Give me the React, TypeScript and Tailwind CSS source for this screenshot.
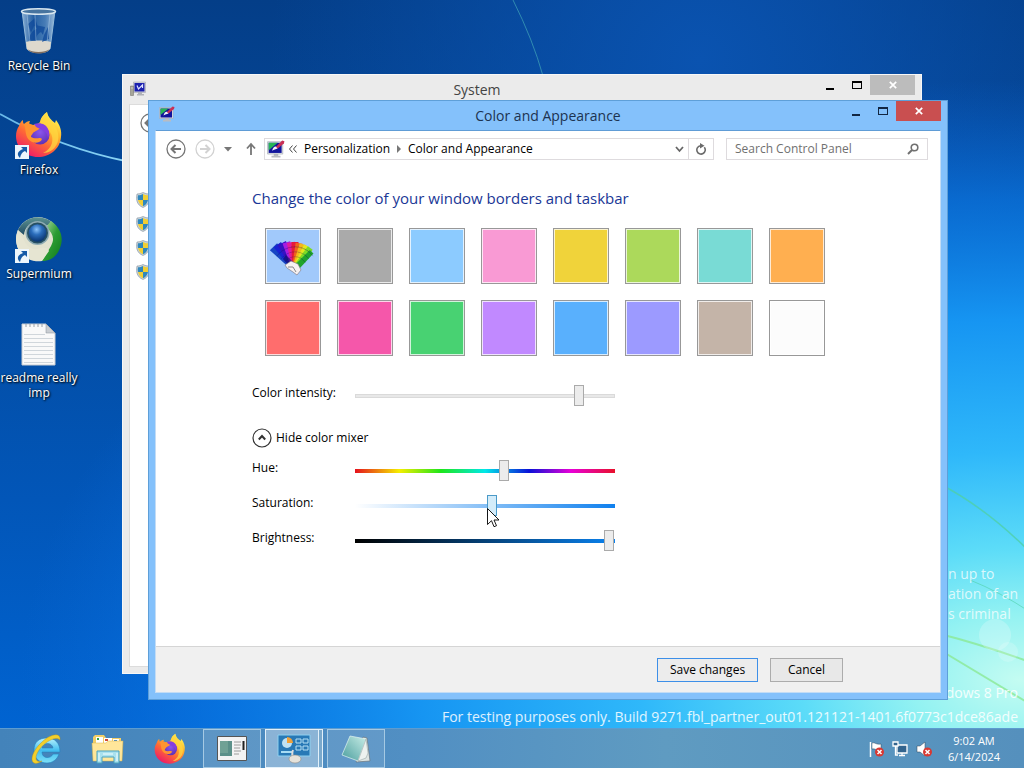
import type { ReactNode } from 'react';

const swatches = [
  { name: 'Automatic', color: 'bg-[#a1c9fb]' },
  { name: 'Gray', color: 'bg-[#aaaaaa]' },
  { name: 'Sky', color: 'bg-[#8ccbff]' },
  { name: 'Pink', color: 'bg-[#f99ad4]' },
  { name: 'Yellow', color: 'bg-[#f0d33a]' },
  { name: 'Lime', color: 'bg-[#acd95b]' },
  { name: 'Turquoise', color: 'bg-[#79dbd5]' },
  { name: 'Orange', color: 'bg-[#ffaf50]' },
  { name: 'Red', color: 'bg-[#ff6d6d]' },
  { name: 'Magenta', color: 'bg-[#f557aa]' },
  { name: 'Green', color: 'bg-[#48d272]' },
  { name: 'Violet', color: 'bg-[#c189ff]' },
  { name: 'Blue', color: 'bg-[#59b0fd]' },
  { name: 'Lavender', color: 'bg-[#9c9aff]' },
  { name: 'Taupe', color: 'bg-[#c4b4a8]' },
  { name: 'White', color: 'bg-[#fcfcfc]' },
];

function FirefoxIcon({ className }: { className: string }) {
  return (
    <svg viewBox="0 0 48 48" className={className} aria-hidden="true">
      <defs>
        <linearGradient id="fxBody" x1="0.8" y1="0.1" x2="0.25" y2="0.95">
          <stop offset="0" stopColor="#fff050" />
          <stop offset="0.3" stopColor="#ffb52c" />
          <stop offset="0.6" stopColor="#ff6a35" />
          <stop offset="1" stopColor="#ee1d66" />
        </linearGradient>
        <radialGradient id="fxGlobe" cx="0.5" cy="0.35" r="0.7">
          <stop offset="0" stopColor="#8a55ee" />
          <stop offset="1" stopColor="#5a2eb0" />
        </radialGradient>
      </defs>
      <path d="M4 15c1-3 2-5 4-6 0 2 0 3 1 4 2-2 4-3 6-3-1 2-1 3 0 4 4 0 7 0 10-3 1-5 4-8 7-10 1 5 4 8 8 11l1-3c4 5 6 11 5 17-1 12-11 20-23 20S1 37 1 25c0-4 1-7 3-10z" fill="url(#fxBody)" />
      <path d="M32 1c0 6 3 9 7 13 4 5 6 12 3 19-3 6-8 9-14 9 9-4 12-14 7-21-3-5-8-6-10-10 1-5 4-8 7-10z" fill="#ffd842" opacity=".75" />
      <circle cx="25" cy="24" r="9.5" fill="url(#fxGlobe)" />
      <path d="M9 13c3 0 7-1 10 2 3 1 5 1 6 2-1 2-5 3-7 5-1 2-2 2-2 4 3 2 7 1 9 1 3 0 2 3-1 4-5 2-10-1-12-5-2-5-1-8-3-13z" fill="#ff9430" />
      <path d="M19 13c6-2 12 0 14 5 2 4 1 7 0 9-1-5-3-7-6-8-3-2-6-2-8-6z" fill="#863ee0" />
    </svg>
  );
}

function ShortcutArrow() {
  return (
    <svg viewBox="0 0 14 14" className="absolute bottom-0 left-0 h-3.5 w-3.5" aria-hidden="true">
      <path d="M0 0h14v14H0z" fill="#eef6fc" />
      <path d="M6 2h6v6l-2-2c-3 1-4 3-5 7C1 9 3 6 8 4z" fill="#175ba8" />
    </svg>
  );
}

function RecycleBinIcon() {
  return (
    <svg viewBox="0 0 48 48" className="h-12 w-12" aria-hidden="true">
      <defs>
        <linearGradient id="glass" x1="0" x2="1">
          <stop offset="0" stopColor="#b9d6ee" stopOpacity=".75" />
          <stop offset=".35" stopColor="#3d77b5" stopOpacity=".6" />
          <stop offset=".7" stopColor="#6b9dce" stopOpacity=".65" />
          <stop offset="1" stopColor="#c4dbee" stopOpacity=".8" />
        </linearGradient>
      </defs>
      <path d="M7 4l5 38c4 5 20 5 23 0l5-38z" fill="url(#glass)" stroke="#94bad9" strokeWidth="1" />
      <path d="M11 35c7-2 18-2 25 0l-1 7c-5 5-18 5-23 0z" fill="#ded9cd" />
      <path d="M12 42c5 4 18 4 23 0-4 6-18 6-23 0z" fill="#806d5e" />
      <path d="M14 33c1-7 4-10 8-11l-2-4 10 2-2 8-2-3c-4 2-5 5-5 9zM13 17l7-6 3 9-4-1-3 7zM33 20l1 12-7 3 2-7z" fill="#0e489a" opacity=".75" />
      <path d="M12 7l3 29M35 7l-3 29M20 7l1 28" stroke="#c8e0f3" strokeWidth="1" opacity=".4" />
      <ellipse cx="23.500" cy="4.500" rx="17" ry="2.800" fill="#47749f" stroke="#d8e6ef" strokeWidth="1.500" />
    </svg>
  );
}

function SupermiumIcon() {
  return (
    <svg viewBox="0 0 48 48" className="h-12 w-12" aria-hidden="true">
      <defs>
        <radialGradient id="smCore" cx=".45" cy=".3" r=".75">
          <stop offset="0" stopColor="#8cc4fb" />
          <stop offset=".4" stopColor="#2b6dbb" />
          <stop offset="1" stopColor="#052c65" />
        </radialGradient>
        <linearGradient id="smGreen" x1="0" x2="1" y2="1">
          <stop offset="0" stopColor="#bfe0b0" />
          <stop offset=".5" stopColor="#2c9c33" />
          <stop offset="1" stopColor="#0f7a1a" />
        </linearGradient>
        <linearGradient id="smBlue" x1="0" x2="0" y2="1">
          <stop offset="0" stopColor="#5e9492" />
          <stop offset="1" stopColor="#1f4a63" />
        </linearGradient>
      </defs>
      <circle cx="23" cy="24" r="22" fill="#e2e2cf" />
      <path d="M3 15C8 5 18 0 28 3c5 1 8 3 10 6l-9 2C18 5 10 10 9 20z" fill="url(#smBlue)" />
      <path d="M36 6c10 7 13 17 9 27-3 8-9 13-18 13l9-15c4-7 2-13-5-19z" fill="url(#smGreen)" />
      <path d="M3 15l6 10c3 8 10 11 17 8 4-1 7 0 8 3l-7 10C13 48 1 38 1 24c0-3 1-6 2-9z" fill="#e6e5d2" />
      <circle cx="22.500" cy="18" r="12" fill="#8eabb2" />
      <circle cx="22.500" cy="18" r="10.500" fill="#264f63" />
      <circle cx="22.500" cy="18" r="8.800" fill="url(#smCore)" />
    </svg>
  );
}

function TextFileIcon() {
  return (
    <svg viewBox="0 0 48 48" className="h-12 w-12" aria-hidden="true">
      <path d="M7 5h24l9 9v32H7z" fill="#f9f9f9" stroke="#c9cdd2" strokeWidth="1" />
      <path d="M31 5v9h9z" fill="#c9cdd2" stroke="#8a929a" strokeWidth=".5" />
      <path d="M9 15.500h21M9 19.500h29M9 23.500h29M9 27.500h29M9 31.500h29M9 35.500h29M9 39.500h29M9 43.500h29" stroke="#d0d6db" />
      <path d="M11 5v3M15 5v3M19 5v3M23 5v3M27 5v3" stroke="#9aa1a7" />
    </svg>
  );
}

function BrushMonitor({ className }: { className: string }) {
  return (
    <svg viewBox="0 0 16 16" className={className} aria-hidden="true">
      <path d="M6 12h4v2h2v1.500H4V14h2z" fill="#b9bcc2" />
      <path d="M.5 1.500h13.500v11H.500z" fill="#dfe1e6" stroke="#9aa0aa" strokeWidth=".5" />
      <path d="M1.500 2.500h11.500v9H1.500z" fill="#10149c" />
      <path d="M1.500 2.500h8L1.500 9z" fill="#27b457" />
      <path d="M4.500 9.500c1-3.500 2.500-4 4-3.500l1 1.500c-2 .5-3 1-5 2z" fill="#f3f3f8" />
      <path d="M8 6l5.500-5.500 2 .5-.5 2-5.500 4.500z" fill="#c92f55" />
    </svg>
  );
}

function ComputerIcon({ className }: { className: string }) {
  return (
    <svg viewBox="0 0 16 16" className={className} aria-hidden="true">
      <path d="M8 11h4v2h2v1.500H7V13h1z" fill="#b0b2b8" />
      <path d="M3.500 1h12v10.500h-12z" fill="#d4d5dc" stroke="#9a9ca8" strokeWidth=".5" />
      <path d="M4.500 2h10v8.500h-10z" fill="#1a1fae" />
      <path d="M7 4.500l1.500 3.500L12.500 4v3" fill="none" stroke="#dfe2ff" strokeWidth="1.200" />
      <path d="M.5 5h3v9.500h-3z" fill="#a6a598" stroke="#6d6d64" strokeWidth=".5" />
      <path d="M1.500 7h1" stroke="#fff" />
    </svg>
  );
}

function ArrowCircle({ back, faded }: { back: boolean; faded: boolean }) {
  return (
    <svg viewBox="0 0 20 20" className="h-5 w-5" fill="none" stroke={faded ? '#d2d2d2' : '#767676'} aria-hidden="true">
      <circle cx="10" cy="10" r="9" strokeWidth="1.300" />
      <path d={back ? 'M15 10H6M9.500 6L5.500 10l4 4' : 'M5 10h9M10.500 6l4 4-4 4'} strokeWidth="2" />
    </svg>
  );
}

function Shield() {
  return (
    <svg viewBox="0 0 14 16" className="h-4 w-3.5" aria-hidden="true">
      <path d="M7 .5c2 1 4 1.500 6 1.500 1.200 6 0 11-6 13.500C1 13 -.2 8 1 2 3 2 5 1.500 7 .500z" fill="#c9d3da" stroke="#7f8f9c" strokeWidth=".6" />
      <path d="M7 2C5.500 3 4 3.200 2 3.200 1.600 5 1.600 6.500 2 8h5z" fill="#2f87bd" />
      <path d="M7 2c1.500 1 3 1.200 5 1.200.4 1.800.4 3.300 0 4.800H7z" fill="#f1cf35" />
      <path d="M2 8h5v6.300C4.200 13 2.600 11 2 8z" fill="#f1cf35" />
      <path d="M7 8h5c-.6 3-2.200 5-5 6.300z" fill="#2f87bd" />
    </svg>
  );
}

const blades = [
  { angle: -44, length: 31, width: 10, fill: '#1745c4' },
  { angle: -36, length: 30, width: 9, fill: '#1a22d2' },
  { angle: -27, length: 29, width: 9, fill: '#3413c2' },
  { angle: -18, length: 28, width: 8, fill: '#a61ee0' },
  { angle: -9, length: 27, width: 8, fill: '#e01c9c' },
  { angle: 0, length: 27, width: 7, fill: '#e51b3b' },
  { angle: 9, length: 26, width: 7, fill: '#f0641d' },
  { angle: 18, length: 26, width: 7, fill: '#f3b91b' },
  { angle: 27, length: 26, width: 6, fill: '#e4e61e' },
  { angle: 36, length: 26, width: 6, fill: '#7fdb25' },
  { angle: 44, length: 24, width: 5, fill: '#1fa32c' },
];

function ColorFan() {
  return (
    <svg viewBox="0 0 54 54" className="h-full w-full" aria-hidden="true">
      {blades.map((b) => (
        <g key={b.fill} transform={`translate(29 40) rotate(${b.angle})`}>
          <path d={`M${-b.width / 2} ${-b.length}h${b.width}L3 0h-6z`} fill={b.fill} />
          <path d="M-4 -22h8M-3 -17h6M-3 -12h6" stroke="#0a0a50" strokeWidth=".6" opacity=".4" />
        </g>
      ))}
      <path d="M17 30l8 9 3-5-8-8z" fill="#0c1060" opacity=".6" />
      <path d="M19 36l6-4 7 3 3 6-4 5-4-3-6-4z" fill="#f6f1f1" stroke="#77717a" strokeWidth=".6" />
      <path d="M22 38l5 0 3 5" fill="none" stroke="#888" />
    </svg>
  );
}

function WindowControls({ active }: { active: boolean }) {
  return (
    <div className="flex h-5 pr-1.5">
      <button aria-label="Minimize" className="flex w-[27px] items-end justify-center pb-[5px]">
        <span className={active ? 'h-0.5 w-2 bg-[#132742]' : 'h-0.5 w-2 bg-black'} />
      </button>
      <button aria-label="Maximize" className="flex w-[27px] items-center justify-center">
        <span className={active ? 'h-2 w-2.5 border border-t-2 border-[#132742]' : 'h-2 w-2.5 border border-t-2 border-black'} />
      </button>
      <button aria-label="Close" className={active ? 'flex w-[45px] items-center justify-center bg-[#c94f50]' : 'flex w-[45px] items-center justify-center bg-[#bcbcbc]'}>
        <svg viewBox="0 0 8 8" className="h-2 w-2" stroke="#fff" strokeWidth="1.700" aria-hidden="true">
          <path d="M.8.800l6.400 6.400M7.200.800L.8 7.200" />
        </svg>
      </button>
    </div>
  );
}

function DesktopIcon({ label, shortcut, children }: { label: string; shortcut?: boolean; children: ReactNode }) {
  return (
    <li className="h-[104px]">
      <a href="#desktop" className="flex flex-col items-center gap-[3px]">
        <span className="relative">
          {children}
          {shortcut && <ShortcutArrow />}
        </span>
        <span className="text-center text-xs leading-[15px] text-white [text-shadow:1px_1px_2px_#000,0_0_2px_#0008]">{label}</span>
      </a>
    </li>
  );
}

function SliderRow({ id, label, value, track, hot, children }: { id: string; label: string; value: number; track: string; hot?: boolean; children?: ReactNode }) {
  const thumb = hot
    ? '[&::-webkit-slider-thumb]:border-[#4b9ac8] [&::-webkit-slider-thumb]:bg-[#d3ecfa]'
    : '[&::-webkit-slider-thumb]:border-[#aaaaaa] [&::-webkit-slider-thumb]:bg-[#ececec]';
  return (
    <div className="flex h-[23px]">
      <label htmlFor={id} className="w-[103px] shrink-0 leading-5">{label}</label>
      <div className="relative flex h-[21px] w-[260px] items-center self-end">
        <span className={`absolute inset-x-0 h-1 ${track}`} />
        <input
          id={id}
          type="range"
          min={0}
          max={250}
          defaultValue={value}
          className={`relative h-[21px] w-full appearance-none bg-transparent [&::-webkit-slider-thumb]:h-[21px] [&::-webkit-slider-thumb]:w-2.5 [&::-webkit-slider-thumb]:appearance-none [&::-webkit-slider-thumb]:border [&::-webkit-slider-thumb]:border-solid ${thumb}`}
        />
        {children}
      </div>
    </div>
  );
}

function Wallpaper() {
  return (
    <svg viewBox="0 0 1024 768" preserveAspectRatio="none" className="absolute inset-0 h-full w-full" aria-hidden="true">
      <defs>
        <linearGradient id="sky" x1="0" y1="0" x2="0" y2="1">
          <stop offset="0" stopColor="#043e88" />
          <stop offset=".35" stopColor="#034ba0" />
          <stop offset=".65" stopColor="#0256b8" />
          <stop offset="1" stopColor="#0066d6" />
        </linearGradient>
        <radialGradient id="topGlow" gradientUnits="userSpaceOnUse" cx="700" cy="60" r="430">
          <stop offset="0" stopColor="#0a53b0" />
          <stop offset="1" stopColor="#0a53b0" stopOpacity="0" />
        </radialGradient>
        <radialGradient id="glow" gradientUnits="userSpaceOnUse" cx="0" cy="0" r="1" gradientTransform="translate(1020 680) scale(1000 600)">
          <stop offset="0" stopColor="#c4fcf2" />
          <stop offset=".11" stopColor="#93f2f2" />
          <stop offset=".22" stopColor="#5cdcf8" />
          <stop offset=".38" stopColor="#2fb8fa" />
          <stop offset=".6" stopColor="#1695f2" />
          <stop offset=".8" stopColor="#0b78e4" stopOpacity=".7" />
          <stop offset="1" stopColor="#0a68d8" stopOpacity="0" />
        </radialGradient>
        <linearGradient id="arc" x1="0" x2="1">
          <stop offset="0" stopColor="#68b8e8" />
          <stop offset="1" stopColor="#8bd5f5" />
        </linearGradient>
      </defs>
      <path d="M0 0h1024v768H0z" fill="url(#sky)" />
      <path d="M0 0h1024v768H0z" fill="url(#topGlow)" />
      <path d="M0 0h1024v768H0z" fill="url(#glow)" />
      <path d="M0 114q60 34 130 48" fill="none" stroke="url(#arc)" strokeWidth="1.800" />
      <path d="M513 0q20 40 30 76" fill="none" stroke="#3b9bb5" strokeWidth="1" opacity=".8" />
      <path d="M940 484q46 24 90 68" fill="none" stroke="#4fd0a8" strokeWidth="1.500" opacity=".8" />
      <path d="M970 580q30 12 60 32" fill="none" stroke="#4fd0a8" strokeWidth="1" opacity=".6" />
      <path d="M940 634q40 10 90 28M940 650q40 24 90 54" fill="none" stroke="#8be895" strokeWidth="2" opacity=".8" />
      <circle cx="995" cy="635" r="16" fill="#fff" opacity=".22" />
      <circle cx="1008" cy="652" r="10" fill="#fff" opacity=".18" />
    </svg>
  );
}

function SystemWindow() {
  return (
    <section aria-label="System" className="absolute top-[74px] right-[102px] bottom-[54px] left-[122px] flex flex-col border border-[#f7f7f7] bg-[#ebebeb]">
      <header className="flex h-[29px] items-start">
        <ComputerIcon className="mt-1.5 ml-[7px] h-4 w-4" />
        <h2 className="flex-1 pr-2 text-center text-sm leading-[29px] text-[#444]">System</h2>
        <WindowControls active={false} />
      </header>
      <div className="mx-1.5 mb-1.5 flex-1 border border-[#dcdcdc] bg-white pl-1.5">
        <div className="flex pt-2 pl-1"><ArrowCircle back faded={false} /></div>
        <div className="flex flex-col gap-2 pt-[59px]">
          <Shield /><Shield /><Shield /><Shield />
        </div>
      </div>
    </section>
  );
}

function NavigationBar() {
  return (
    <nav className="flex h-[22px] items-center pr-3 pl-2.5 text-[#333]">
      <button aria-label="Back"><ArrowCircle back faded={false} /></button>
      <button aria-label="Forward" className="ml-[9px]"><ArrowCircle back={false} faded /></button>
      <button aria-label="Recent locations" className="ml-[9px]">
        <svg viewBox="0 0 8 5" className="h-[5px] w-2" aria-hidden="true"><path d="M0 0h8L4 4.500z" fill="#777" /></svg>
      </button>
      <button aria-label="Up" className="ml-[13px]">
        <svg viewBox="0 0 12 14" className="h-3.5 w-3" fill="none" stroke="#777" strokeWidth="1.800" aria-hidden="true"><path d="M6 13V2M2 6.500l4-4.500 4 4.500" /></svg>
      </button>
      <div className="ml-[7px] flex h-full flex-1 items-center border border-[#dedbde] pl-0.5 text-black">
        <BrushMonitor className="h-[18px] w-[18px]" />
        <svg viewBox="0 0 8 8" className="ml-1 h-2 w-2" fill="none" stroke="#444" aria-hidden="true"><path d="M3.500.500L.500 4l3 3.500M7.500.500L4.500 4l3 3.500" /></svg>
        <a href="#personalization" className="ml-[7px]">Personalization</a>
        <svg viewBox="0 0 4 8" className="mx-[7px] h-2 w-1" aria-hidden="true"><path d="M0 0l4 4-4 4z" fill="#777" /></svg>
        <a href="#color">Color and Appearance</a>
        <button aria-label="Previous locations" className="mr-1 ml-auto">
          <svg viewBox="0 0 9 7" className="h-[7px] w-[9px]" fill="none" stroke="#666" strokeWidth="1.800" aria-hidden="true"><path d="M1 1l3.500 4L8 1" /></svg>
        </button>
        <button aria-label="Refresh" className="flex h-full w-[25px] items-center justify-center border-l border-[#dedbde]">
          <svg viewBox="0 0 12 12" className="h-3 w-3" aria-hidden="true"><path d="M9.300 4.200A4.200 4.200 0 1 1 5.500 2.700" fill="none" stroke="#6b6b6b" strokeWidth="1.600" /><path d="M5 0l4.500 2.700L5 5.400z" fill="#6b6b6b" /></svg>
        </button>
      </div>
      <div className="ml-3 flex h-full w-[202px] items-center border border-[#dedbde] pr-2 pl-2">
        <input aria-label="Search Control Panel" placeholder="Search Control Panel" className="min-w-0 flex-1 bg-transparent outline-none placeholder:text-[#707070]" />
        <svg viewBox="0 0 12 12" className="h-3 w-3" fill="none" stroke="#707070" strokeWidth="1.600" aria-hidden="true"><circle cx="7.500" cy="4.500" r="3.300" /><path d="M5 7l-4 4" strokeWidth="2" /></svg>
      </div>
    </nav>
  );
}

function AppearanceWindow() {
  return (
    <section aria-label="Color and Appearance" className="absolute top-[100px] right-[76px] bottom-[28px] left-[148px] flex flex-col border border-[#5e9fd8] bg-[#84c1fb]">
      <header className="relative flex h-[29px] items-start">
        <BrushMonitor className="mt-[5px] ml-2.5 h-4 w-4" />
        <h1 className="pointer-events-none absolute inset-0 text-center text-sm leading-[29px] text-[#1c3350]">Color and Appearance</h1>
        <div className="relative ml-auto"><WindowControls active /></div>
      </header>
      <div className="mx-1.5 mb-1.5 flex flex-1 flex-col border border-[#c3dcf5] border-t-[#5f9cd6] bg-white">
        <div className="pt-[7px]"><NavigationBar /></div>
        <main className="flex-1 pl-24 text-black">
          <h2 className="mt-[26px] text-[15px] leading-6 text-[#1a3796]">Change the color of your window borders and taskbar</h2>
          <div className="mt-[18px] ml-[13px] grid w-[560px] grid-cols-8 gap-4">
            {swatches.map((s, i) => (
              <button key={s.name} aria-label={s.name} className={`h-14 w-14 border border-[#989898] shadow-[inset_0_0_0_1px_#ffffffc0] ${s.color}`}>
                {i === 0 && <ColorFan />}
              </button>
            ))}
          </div>
          <div className="mt-[27px]">
            <SliderRow id="intensity" label="Color intensity:" value={219} track="bg-[#e8e8e8] border border-[#dadada]" />
          </div>
          <button className="mt-[22px] flex h-5 items-center gap-1">
            <svg viewBox="0 0 20 20" className="h-5 w-5" fill="none" stroke="#333" aria-hidden="true"><circle cx="10" cy="10" r="9" strokeWidth="1.200" /><path d="M6.800 11.500L10 8l3.200 3.500" strokeWidth="2" /></svg>
            Hide color mixer
          </button>
          <div className="mt-2.5 flex flex-col gap-3">
            <SliderRow id="hue" label="Hue:" value={144} track="bg-[linear-gradient(90deg,#e5111d,#f5ee00_17%,#1ee61a_33%,#00e8e8_50%,#0a10d8_67%,#e800d8_83%,#e8102a)]" />
            <SliderRow id="saturation" label="Saturation:" value={132} hot track="bg-[linear-gradient(90deg,#ffffff,#0f80ee)]">
              <svg viewBox="0 0 12 20" className="pointer-events-none absolute top-[13px] left-[132px] h-5 w-3" aria-hidden="true">
                <path d="M.5.500v16l4-3.800 2.500 6 2.500-1-2.500-5.700h5z" fill="#fff" stroke="#000" strokeWidth=".9" />
              </svg>
            </SliderRow>
            <SliderRow id="brightness" label="Brightness:" value={249} track="bg-[linear-gradient(90deg,#000000,#0a82ef)]" />
          </div>
        </main>
        <footer className="flex h-[46px] items-center justify-end gap-3 border-t border-[#d5d5d5] bg-[#f0f0f0] pr-[97px] text-black">
          <button className="h-6 w-[101px] border border-[#3d8fe8] bg-[#ececec]">Save changes</button>
          <button className="h-6 w-[73px] border border-[#acacac] bg-[#e8e8e8]">Cancel</button>
        </footer>
      </div>
    </section>
  );
}

function TaskButton({ label, state, children }: { label: string; state: 'pinned' | 'open' | 'active'; children: ReactNode }) {
  const look = {
    pinned: 'border-transparent',
    open: 'border-[#a5c9e3] bg-white/10',
    active: 'border-[#e2f0fa] bg-white/35 shadow-[inset_-3px_0_0_#7aa9cc,inset_-4px_0_0_#e2f0fa]',
  }[state];
  return (
    <button aria-label={label} className={`flex h-full w-[58px] items-center justify-center border ${look}`}>
      {children}
    </button>
  );
}

function Taskbar() {
  return (
    <footer className="relative flex h-10 items-center border-t border-[#5d9cd0] bg-[linear-gradient(90deg,#4383ba,#518fc3_40%,#5f9bc1_65%,#5590bd)] pl-[17px] text-white">
      <div className="flex h-full gap-1">
        <TaskButton label="Internet Explorer" state="pinned">
          <svg viewBox="0 0 32 32" className="h-8 w-8" aria-hidden="true">
            <defs><linearGradient id="ie" x1="0" x2="0" y2="1"><stop offset="0" stopColor="#b8f2fd" /><stop offset=".5" stopColor="#42bdf0" /><stop offset="1" stopColor="#7de0f8" /></linearGradient></defs>
            <path fillRule="evenodd" d="M17 5c8 0 13 5 13 14H12c0 7 9 7 11 2h6c-2 6-7 9-12 9C9 30 4 25 4 17S9 5 17 5zM12 15h11c-1-6-10-6-11 0z" fill="url(#ie)" stroke="#2382bd" strokeWidth=".6" />
            <path d="M30 7c1-9-11-5-18 2C4 16-1 27 4 30c2 1 5 0 8-2-4 1-6 0-6-3 0-9 17-24 24-18z" fill="#f3cf2c" stroke="#b99013" strokeWidth=".4" />
          </svg>
        </TaskButton>
        <TaskButton label="File Explorer" state="pinned">
          <svg viewBox="0 0 34 32" className="h-8 w-[34px]" aria-hidden="true">
            <path d="M2 4l2-2h9l2 3h15v22H2z" fill="#f1ce68" />
            <path d="M5 4h7v6H5zM13 5h8v6h-8zM22 6h6v5h-6z" fill="#fff" />
            <path d="M6 5h2v2H6z" fill="#2fa145" /><path d="M14 6h3v2h-3z" fill="#d34c35" /><path d="M23 7h3v2h-3z" fill="#3b82c8" />
            <path d="M1 10h14l2-2h15l-1 20H2z" fill="#ffe69a" stroke="#d9b44d" strokeWidth=".5" />
            <path d="M6 18h22v12h-5v-6H11v6H6z" fill="#a9e1ee" stroke="#4ba2bd" />
            <path d="M8 20v8M26 20v8M12 21h10" stroke="#f2ffff" />
          </svg>
        </TaskButton>
        <TaskButton label="Firefox" state="pinned"><FirefoxIcon className="h-8 w-8" /></TaskButton>
        <TaskButton label="System" state="open">
          <svg viewBox="0 0 30 26" className="h-[26px] w-[30px]" aria-hidden="true">
            <path d="M.5.500h29v24H.500z" fill="#f3f3f3" stroke="#555" />
            <path d="M3 5h12v15H3z" fill="#5b9089" /><path d="M3 5h8v12H3z" fill="#7fae9d" opacity=".6" />
            <path d="M17 6h7M17 9h7M17 12h6M17 15h7M17 18h5" stroke="#9c9c9c" /><path d="M26.500 5v9" stroke="#222" strokeWidth="2" />
          </svg>
        </TaskButton>
        <TaskButton label="Control Panel" state="active">
          <svg viewBox="0 0 34 30" className="h-[30px] w-[34px]" aria-hidden="true">
            <path d="M1 1h32v21H1z" fill="#2879b6" stroke="#8ed0ef" />
            <circle cx="10" cy="9" r="5" fill="#bfe1f3" /><path d="M10 9V3a6 6 0 0 1 6 6z" fill="#f0a13a" />
            <path d="M19 5h5v4h-5zM26 5h5v4h-5zM19 12h5v4h-5zM26 12h5v4h-5z" fill="none" stroke="#b5e1f5" />
            <path d="M4 18h12" stroke="#a7dcf4" strokeWidth="2" />
            <path d="M16 16q-2 5 1 9" fill="none" stroke="#ddd" strokeWidth="2" /><ellipse cx="18" cy="25" rx="6" ry="4" fill="#e5e2da" stroke="#8e8c87" strokeWidth=".6" />
          </svg>
        </TaskButton>
        <TaskButton label="Notepad" state="open">
          <svg viewBox="0 0 32 30" className="h-[30px] w-8" aria-hidden="true">
            <defs><linearGradient id="note" x1="1" x2="0" y2="1"><stop offset="0" stopColor="#c9eee7" /><stop offset="1" stopColor="#499d9d" /></linearGradient></defs>
            <path d="M23 3l4 1 3 23-14 1z" fill="#dde4e2" stroke="#68747b" strokeWidth=".7" />
            <path d="M10 2l16 3-8 22L2 21z" fill="url(#note)" stroke="#e1f3f0" strokeWidth=".7" />
            <path d="M26 5l-8 22 8-3 2-5z" fill="#edf2ef" stroke="#8c9c9c" strokeWidth=".5" />
          </svg>
        </TaskButton>
      </div>
      <div className="ml-auto flex items-center gap-2 pr-4">
        <button aria-label="Action Center">
          <svg viewBox="0 0 16 16" className="h-4 w-4" aria-hidden="true"><path d="M2.500 1v15" stroke="#fff" strokeWidth="1.500" /><path d="M4 2c3-1 4 2 9 1v6c-4 1-6-2-9-1z" fill="#fff" stroke="#234" strokeWidth=".4" /><circle cx="11.500" cy="11" r="4.500" fill="#d83832" /><path d="M9.500 9l4 4M13.500 9l-4 4" stroke="#fff" strokeWidth="1.500" /></svg>
        </button>
        <button aria-label="Network">
          <svg viewBox="0 0 16 16" className="h-4 w-4" fill="none" stroke="#fff" strokeWidth="1.300" aria-hidden="true"><path d="M5 4h10v8H5zM7 14.500h6M10 12v3" fill="#32648e" /><path d="M1 1h5v4H1z" fill="#32648e" /><path d="M3.500 5v9H6" /></svg>
        </button>
        <button aria-label="Volume">
          <svg viewBox="0 0 16 16" className="h-4 w-4" aria-hidden="true"><path d="M1 5h3l5-4v14l-5-4H1z" fill="#fff" stroke="#345" strokeWidth=".5" /><circle cx="11.500" cy="11" r="4.500" fill="#d83832" /><path d="M9.500 9l4 4M13.500 9l-4 4" stroke="#fff" strokeWidth="1.500" /></svg>
        </button>
        <time className="w-[68px] text-center text-[11px] leading-4">9:02 AM<br />6/14/2024</time>
      </div>
    </footer>
  );
}

export default function App() {
  return (
    <div className="relative flex min-h-screen flex-col overflow-hidden text-xs [font-family:'Open_Sans','Noto_Sans',sans-serif]">
      <Wallpaper />
      <div className="relative flex-1">
        <ul className="w-[78px] pt-[7px]">
          <DesktopIcon label="Recycle Bin"><RecycleBinIcon /></DesktopIcon>
          <DesktopIcon label="Firefox" shortcut><FirefoxIcon className="h-12 w-12" /></DesktopIcon>
          <DesktopIcon label="Supermium" shortcut><SupermiumIcon /></DesktopIcon>
          <DesktopIcon label="readme really imp"><TextFileIcon /></DesktopIcon>
        </ul>
        <div className="absolute right-1.5 bottom-[104px] w-[70px] text-sm leading-5 whitespace-nowrap text-white/75">
          <p>n up to</p>
          <p>ation of an</p>
          <p>s criminal</p>
        </div>
        <div className="absolute right-1.5 -bottom-px text-right text-sm leading-6 text-white/85">
          <p>Windows 8 Pro</p>
          <p>For testing purposes only. Build 9271.fbl_partner_out01.121121-1401.6f0773c1dce86ade</p>
        </div>
        <SystemWindow />
        <AppearanceWindow />
      </div>
      <Taskbar />
    </div>
  );
}
